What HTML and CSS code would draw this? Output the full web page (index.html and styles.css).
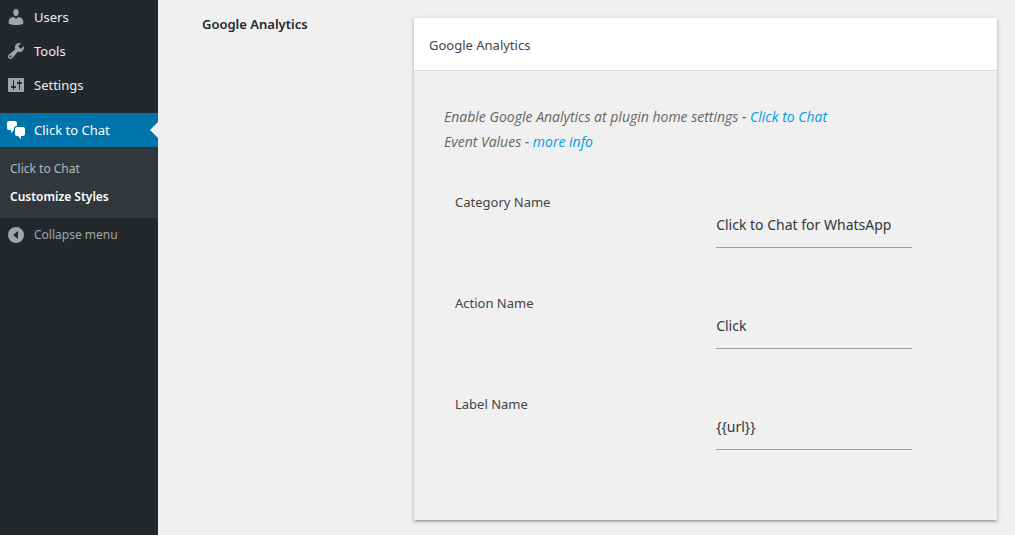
FILE: index.html
```html
<!DOCTYPE html>
<html lang="en">
<head>
<meta charset="utf-8">
<title>Customize Styles</title>
<link rel="stylesheet" href="styles.css">
</head>
<body>
<div class="layout">
  <nav class="sidebar">
    <a class="menu-item" href="#"><svg class="icon" viewBox="0 0 20 20"><path d="M10 9.25c-2.27 0-2.73-3.44-2.73-3.44C7 4.02 7.82 2 9.97 2c2.16 0 2.98 2.02 2.71 3.81 0 0-.41 3.44-2.68 3.44zm0 2.57L12.72 10c2.39 0 4.52 2.33 4.52 4.53v2.49s-3.65 1.13-7.24 1.13c-3.65 0-7.24-1.13-7.24-1.13v-2.49c0-2.25 1.94-4.48 4.47-4.48z"/></svg>Users</a>
    <a class="menu-item" href="#"><svg class="icon" viewBox="0 0 20 20"><path d="M16.68 9.77c-1.34 1.34-3.3 1.67-4.95.99l-5.41 6.52c-.99.99-2.59.99-3.58 0s-.99-2.59 0-3.57l6.52-5.42c-.68-1.65-.35-3.61.99-4.95 1.28-1.28 3.12-1.62 4.72-1.06l-2.89 2.89 2.82 2.82 2.86-2.87c.53 1.58.18 3.39-1.08 4.65zM3.81 16.21c.4.39 1.04.39 1.43 0 .4-.4.4-1.04 0-1.43-.39-.4-1.03-.4-1.43 0-.39.39-.39 1.03 0 1.43z"/></svg>Tools</a>
    <a class="menu-item" href="#"><svg class="icon" viewBox="0 0 20 20"><path d="M18 16V4c0-.55-.45-1-1-1H3c-.55 0-1 .45-1 1v12c0 .55.45 1 1 1h14c.55 0 1-.45 1-1zM8 11h1c.55 0 1 .45 1 1s-.45 1-1 1H8v1.5c0 .28-.22.5-.5.5s-.5-.22-.5-.5V13H6c-.55 0-1-.45-1-1s.45-1 1-1h1V5.5c0-.28.22-.5.5-.5s.5.22.5.5V11zm5-2h-1c-.55 0-1-.45-1-1s.45-1 1-1h1V5.5c0-.28.22-.5.5-.5s.5.22.5.5V7h1c.55 0 1 .45 1 1s-.45 1-1 1h-1v5.5c0 .28-.22.5-.5.5s-.5-.22-.5-.5V9z"/></svg>Settings</a>
    <a class="menu-item active" href="#"><svg class="icon" viewBox="0 0 20 20"><path d="M11 6h-.82C9.07 6 8 7.2 8 8.16V10l-3 3v-3H3c-1.1 0-2-.9-2-2V3c0-1.1.9-2 2-2h6c1.1 0 2 .9 2 2v3zm0 1h6c1.1 0 2 .9 2 2v5c0 1.1-.9 2-2 2h-2v3l-3-3h-1c-1.1 0-2-.9-2-2V9c0-1.1.9-2 2-2z"/></svg>Click to Chat</a>
    <div class="submenu">
      <a class="submenu-item" href="#">Click to Chat</a>
      <a class="submenu-item current" href="#">Customize Styles</a>
    </div>
    <button class="menu-item collapse" type="button"><svg class="icon" viewBox="0 0 20 20"><path fill-rule="evenodd" d="M10 2a8 8 0 1 1 0 16a8 8 0 0 1 0-16zM12 6v8l-5-4z"/></svg>Collapse menu</button>
  </nav>
  <main class="content">
    <h2 class="section-title">Google Analytics</h2>
    <section class="card">
      <h3 class="card-header">Google Analytics</h3>
      <div class="card-body">
        <p class="description">Enable Google Analytics at plugin home settings - <a href="#">Click to Chat</a><br>Event Values - <a href="#">more info</a></p>
        <div class="field">
          <label for="category">Category Name</label>
          <input id="category" type="text" value="Click to Chat for WhatsApp">
        </div>
        <div class="field">
          <label for="action">Action Name</label>
          <input id="action" type="text" value="Click">
        </div>
        <div class="field">
          <label for="label">Label Name</label>
          <input id="label" type="text" value="{{url}}">
        </div>
      </div>
    </section>
  </main>
</div>
</body>
</html>
```
FILE: styles.css
```css
* {
  box-sizing: border-box;
}

body {
  margin: 0;
  background: #f0f0f0;
  color: #444;
  font: 13px/20px "Noto Sans", "Open Sans", sans-serif;
}

.layout {
  display: flex;
  min-height: 100vh;
}

.sidebar {
  flex: 0 0 158px;
  background: #23282d;
}

.menu-item {
  position: relative;
  display: flex;
  align-items: center;
  gap: 8px;
  width: 100%;
  height: 34px;
  padding: 0 6px;
  border: 0;
  background: none;
  color: #eee;
  font: inherit;
  text-decoration: none;
}

.icon {
  width: 20px;
  height: 20px;
  fill: #a0a5aa;
}

.active {
  margin-top: 11px;
  background: #0073aa;
  color: #fff;
}

.active .icon {
  fill: #fff;
}

.active::after {
  content: "";
  position: absolute;
  top: 9px;
  right: 0;
  border: 8px solid transparent;
  border-left-width: 0;
  border-right-color: #f0f0f0;
}

.submenu {
  padding: 8px 0 7px;
  background: #32373c;
}

.submenu-item {
  display: block;
  padding: 4px 10px;
  color: #b4b9be;
  font-size: 12px;
  text-decoration: none;
}

.current {
  color: #fff;
  font-weight: 600;
}

.collapse {
  color: #a0a5aa;
  font-size: 12px;
}

.content {
  flex: 1;
  display: flex;
  align-items: flex-start;
  padding: 16px 18px 14px 44px;
}

.section-title {
  flex: 0 0 212px;
  margin: 0;
  color: #23282d;
  font-size: 13px;
  font-weight: 600;
  line-height: 16px;
}

.card {
  flex: 1;
  margin-top: 2px;
  box-shadow: 0 2px 2px 0 rgba(0, 0, 0, .14), 0 3px 1px -2px rgba(0, 0, 0, .12), 0 1px 5px 0 rgba(0, 0, 0, .2);
}

.card-header {
  margin: 0;
  padding: 17px 15px 15px;
  border-bottom: 1px solid #ddd;
  background: #fff;
  font-size: 13px;
  font-weight: 400;
}

.card-body {
  padding: 33px 30px 30px;
}

.description {
  margin: 0 0 33px;
  color: #666;
  font-family: "Open Sans", "Noto Sans", sans-serif;
  font-size: 14px;
  font-style: italic;
  line-height: 25px;
}

.description a {
  color: #039be5;
  text-decoration: none;
}

.field {
  display: grid;
  grid-template-columns: 4fr 3fr;
  align-items: start;
  padding: 0 55px 40px 11px;
}

.field input {
  width: 100%;
  height: 45px;
  margin-top: 16px;
  padding: 0 0 2px;
  border: 0;
  border-bottom: 1px solid #9e9e9e;
  background: transparent;
  color: #32373c;
  font: inherit;
  font-size: 14px;
}

.field label {
  padding-top: 5px;
}
```
